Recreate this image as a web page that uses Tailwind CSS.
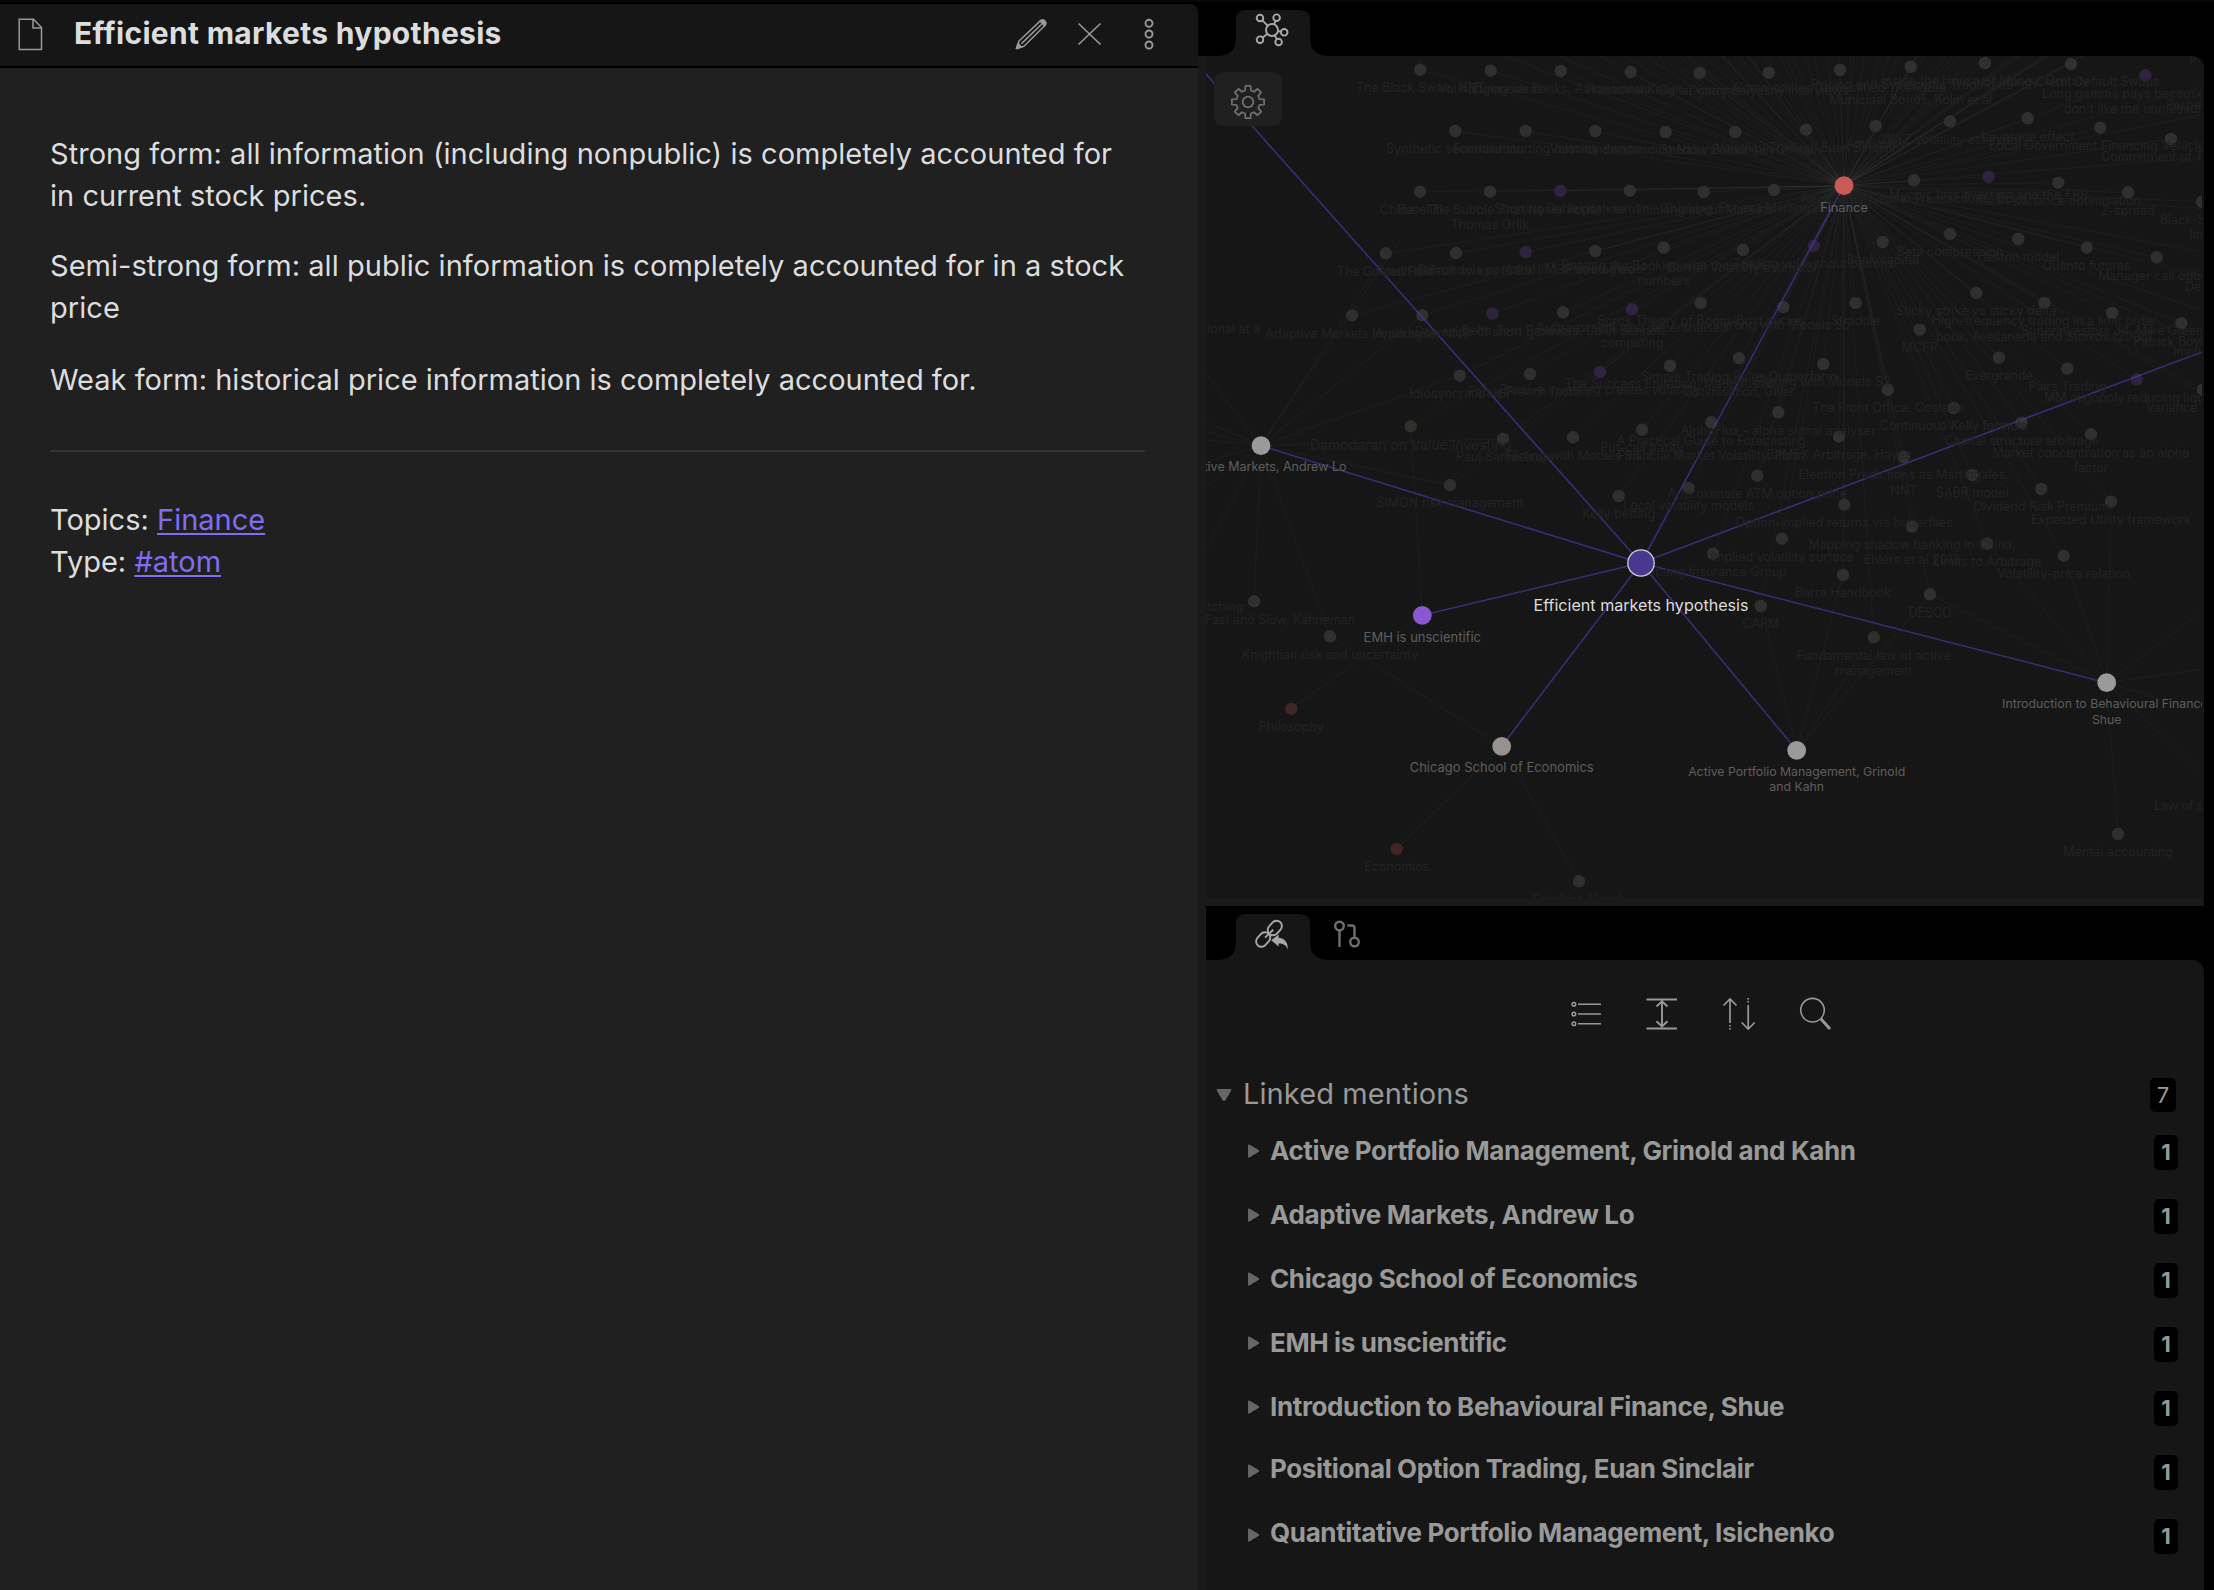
<!DOCTYPE html>
<html lang="en">
<head>
<meta charset="utf-8">
<title>Efficient markets hypothesis</title>
<script src="https://cdn.jsdelivr.net/npm/@tailwindcss/browser@4"></script>
</head>
<body class="bg-black">
<div class="flex h-[1590px] w-[2214px] flex-col overflow-hidden bg-black font-['Inter',sans-serif]">
  <div class="h-[2px] shrink-0 bg-[#080808]"></div>
  <div class="flex min-h-0 flex-1">

    <!-- Note pane -->
    <main class="flex w-[1198px] shrink-0 flex-col pt-[2px]">
      <header class="flex h-16 shrink-0 items-center rounded-tr-lg border-b-2 border-black bg-[#161616] pr-[33px] pl-[16px]">
        <svg class="mb-[2px] h-9 w-7 shrink-0" viewBox="0 0 28 36" fill="none" stroke="#999" stroke-width="1.5"><path d="M3.2 3.2H17.5L25.5 11.5V33.5H3.2ZM17 3.2V12H25.5"/></svg>
        <h1 class="ml-[30px] flex-1 pb-1 text-[30px] leading-none font-bold tracking-[0.3px] text-[#dcddde]">Efficient markets hypothesis</h1>
        <div class="flex items-center gap-[27px] pb-[3px]">
          <svg class="h-8 w-8" viewBox="0 0 32 32" fill="none" stroke="#999" stroke-width="1.5" stroke-linejoin="round"><path d="M1.5 30.5 4 23 24.5 3.6Q27.5.8 30 3.2 32 5.400 29.300 8L9 28.300Z"/><path d="M6.500 25.600 26.500 6.200"/><path d="M1.500 30.500 3 25.500 6.500 29ZM25 3Q27.500.8 30 3.200 31.500 5 29.500 8Z" fill="#999"/></svg>
          <svg class="h-8 w-8" viewBox="0 0 32 32" fill="none" stroke="#999" stroke-width="1.6"><path d="M4.500 5.500 26.500 26.500M26.500 5.500 4.500 26.500"/></svg>
          <svg class="h-8 w-8" viewBox="0 0 32 32" fill="none" stroke="#999" stroke-width="1.900"><circle cx="16" cy="5.300" r="3.500"/><circle cx="16" cy="16" r="3.500"/><circle cx="16" cy="27" r="3.500"/></svg>
        </div>
      </header>
      <article class="flex-1 bg-[#202020] px-[50px] pt-[65px] text-[29px] leading-[42px] tracking-[0.04px] text-[#dcddde]">
        <p class="mb-7">Strong form: all information (including nonpublic) is completely accounted for<br>in current stock prices.</p>
        <p class="mb-[30px]">Semi-strong form: all public information is completely accounted for in a stock<br>price</p>
        <p class="mb-[49px] tracking-normal">Weak form: historical price information is completely accounted for.</p>
        <hr class="mr-[3px] mb-[47px] border-0 border-t-2 border-[#333]">
        <p class="tracking-normal">Topics: <a class="text-[#7f6df2] underline decoration-2 underline-offset-[3px]">Finance</a><br>Type: <a class="text-[#7f6df2] underline decoration-2 underline-offset-[3px]">#atom</a></p>
      </article>
    </main>

    <!-- Resize handle -->
    <div class="w-2 shrink-0 pt-[54px]"><div class="h-full bg-[#1a1a1a]"></div></div>

    <!-- Side panes -->
    <aside class="flex w-[998px] shrink-0 flex-col">
      <div class="relative flex h-[54px] shrink-0 items-end">
        <svg class="absolute bottom-0 left-[-8px] h-[46px] w-[140px]" viewBox="0 0 140 46" fill="#161616"><path d="M20 46Q38 45 38 28V10Q38 0 48 0H102Q112 0 112 10V28Q112 45 130 46Z"/></svg>
        <div class="relative ml-[30px] flex h-[46px] w-[74px] justify-center pr-[2px] pt-[3px]">
          <svg class="h-[34px] w-[34px]" viewBox="0 0 34 34" fill="none" stroke="#a8a8a8" stroke-width="1.900"><circle cx="17" cy="17" r="6"/><circle cx="5" cy="5" r="3.300"/><circle cx="21.600" cy="4.700" r="3.300"/><circle cx="29.200" cy="19.300" r="3.300"/><circle cx="23.600" cy="29" r="3.300"/><circle cx="5" cy="26.700" r="3.300"/><path d="M7.300 7.300 12.700 12.700M20.500 7.900 19 11.300M23 18 26 18.700M19.700 22.500 21.900 26M7.600 24.500 12.400 21"/></svg>
        </div>
      </div>
      <section class="relative h-[850px] shrink-0 overflow-hidden rounded-tr-xl border-r-2 border-b-8 border-r-[#161616] border-b-[#1a1a1a] bg-[#161616]">
        <svg id="graph" class="block h-[842px] w-[996px]" viewBox="1206 56 996 842" font-family="Inter, sans-serif" text-anchor="middle"></svg>
        <button class="absolute top-4 left-2 flex h-[54px] w-[68px] items-center justify-center rounded-[10px] bg-[#202020] pt-[6px]">
          <svg id="gear" class="h-9 w-9" viewBox="-18 -18 36 36" fill="none" stroke="#6e6e6e" stroke-width="1.800" stroke-linejoin="round"></svg>
        </button>
      </section>

      <div class="relative flex h-[54px] shrink-0 items-end bg-black">
        <svg class="absolute bottom-0 left-[-8px] h-[46px] w-[140px]" viewBox="0 0 140 46" fill="#161616"><path d="M20 46Q38 45 38 28V10Q38 0 48 0H102Q112 0 112 10V28Q112 45 130 46Z"/></svg>
        <div class="relative ml-[30px] flex h-[46px] w-[74px] justify-center pr-[2px] pt-[5px]">
          <svg class="h-[34px] w-[34px]" viewBox="0 0 34 34" fill="none" stroke="#a8a8a8" stroke-width="1.900"><rect x="-8" y="-5.300" width="16" height="10.600" rx="5.300" transform="translate(19.800 9) rotate(-48)"/><rect x="-8" y="-5.300" width="16" height="10.600" rx="5.300" transform="translate(8.200 20.500) rotate(-48)"/><path d="M10 18.600 18.200 10.800"/><path d="M16.200 21.300 23.600 15.500V18.700C29.500 19 33.500 23.500 32.600 30.500 31.500 26.500 28.500 24.200 23.600 24.400V27.500Z" fill="#a8a8a8" stroke="none"/></svg>
        </div>
        <svg class="mb-[9px] ml-[20px] h-[34px] w-[34px]" viewBox="0 0 34 34" fill="none" stroke="#6e6e6e" stroke-width="2.400"><circle cx="9.500" cy="9" r="4.300"/><path d="M9.500 13.500V30M17.500 8.500H22Q24.500 8.500 24.500 11V21"/><circle cx="24.500" cy="25" r="4.300"/></svg>
      </div>

      <section class="min-h-0 flex-1 rounded-tr-xl bg-[#161616]">
        <div class="flex gap-[42.300px] pt-[37px] pl-[363px]">
          <svg class="h-[34px] w-[34px]" viewBox="0 0 34 34" fill="none" stroke="#999" stroke-width="1.500"><circle cx="4.900" cy="7.200" r="1.800"/><circle cx="4.900" cy="17" r="1.800"/><circle cx="4.900" cy="26.800" r="1.800"/><path d="M9 7.200H32M9 17H32M9 26.800H32"/></svg>
          <svg class="h-[34px] w-[34px]" viewBox="0 0 34 34" fill="none" stroke="#999" stroke-width="1.900"><path d="M1.500 2.500H32M1.500 31.500H32M17 4.500V29.500M11.500 9.500 17 4.300 22.500 9.500M11.500 24.300 17 29.500 22.500 24.300"/></svg>
          <svg class="h-[34px] w-[34px]" viewBox="0 0 34 34" fill="none" stroke="#999" stroke-width="1.700"><path d="M1.500 8.500 8 2 14.500 8.500M8 2V26M19.700 25.500 26.200 32 32.700 25.500M26.200 32V8"/><path d="M8 28V33M26.200 1V6" stroke-dasharray="1.500 1.500"/></svg>
          <svg class="h-[34px] w-[34px]" viewBox="0 0 34 34" fill="none" stroke="#999" stroke-width="1.600"><circle cx="14.500" cy="13.200" r="11.800"/><path d="M23 22 32 32" stroke-width="3"/></svg>
        </div>

        <div class="mt-[42px] flex h-[44px] items-center pr-7 pl-[10px]">
          <svg class="h-[14px] w-4 shrink-0" viewBox="0 0 16 14" fill="#666"><path d="M2 1H14Q16 1 15 3L9.500 12Q8 14 6.500 12L1 3Q0 1 2 1Z"/></svg>
          <h2 class="ml-[11px] flex-1 pb-1 text-[29px] leading-none tracking-[0.1px] text-[#999]">Linked mentions</h2>
          <span class="flex h-[34px] w-[26px] items-center justify-center rounded-[5px] bg-black text-[22px] text-[#999]">7</span>
        </div>
        <ul id="mentions" class="mt-[3px]"></ul>
      </section>
    </aside>
  </div>
</div>

<template id="mention">
  <li class="flex h-16 items-center pr-[26px] pl-[42px]">
    <svg class="mb-[2px] h-[14px] w-3 shrink-0" viewBox="0 0 12 14" fill="#666"><path d="M0 1.500Q0 0 1.500.5L10.500 6Q12 7 10.500 8L1.500 13.500Q0 14 0 12.500Z"/></svg>
    <span class="ml-[10px] flex-1 text-[26px] leading-none font-bold tracking-[-0.37px] text-[#999]"></span>
    <b class="flex h-[35px] w-6 items-center justify-center rounded-[5px] bg-black text-[22px] font-bold text-[#999]">1</b>
  </li>
</template>

<script>
const mentions = ["Active Portfolio Management, Grinold and Kahn", "Adaptive Markets, Andrew Lo", "Chicago School of Economics", "EMH is unscientific", "Introduction to Behavioural Finance, Shue", "Positional Option Trading, Euan Sinclair", "Quantitative Portfolio Management, Isichenko"];
mentions.forEach((m, i) => {
  const row = document.getElementById("mention").content.cloneNode(true);
  const label = row.querySelector("span");
  label.textContent = m;
  label.classList.add(i < 5 ? "pb-[2px]" : "pb-[6px]");
  document.getElementById("mentions").append(row);
});

// Gear: eight teeth around a ring
let d = "";
for (let i = 0; i < 8; i++) {
  const a = i * Math.PI / 4;
  [[-0.25, 11.9], [-0.16, 16.300], [0.16, 16.300], [0.25, 11.9]].forEach(([o, r], k) => {
    d += (i || k ? "L" : "M") + (r * Math.sin(a + o)).toFixed(2) + " " + (-r * Math.cos(a + o)).toFixed(2);
  });
}
document.getElementById("gear").innerHTML = `<path d="${d}Z"/><circle r="5.300"/>`;

// Notes linked to Finance: x, y, colour (a, b grey; p purple), label
const notes = [
 [1420.3,69.7,"a","The Black Swan, NNT"],[1490.7,70.7,"a","Vol hedging ideas"],[1560.7,71,"a","European Banks, Autonomous"],[1630.7,72,"b","Fractional Kelly"],[1699.7,73,"b","Dollar gamma"],[1768.7,72.7,"a","Dmitry Balyasny interviews"],[1840,70,"a","Commodities Demystified, Trafigura"],[1910.7,66.7,"a","Pricing and Systematic Trading of|Municipal Bonds, Kolm et al"],[1985,63,"a","Inside the House of Money, Drobny"],[2071,64,"a","Hedging Credit Default Swaps"],[2145.3,75.3,"p","Long gamma pays because people|don't like the unmeasurable"],
 [1455.3,131,"b","Synthetic securitisation"],[1525.7,131,"b","Forward starting options"],[1595.3,131,"b","Volatility swaps"],[1665.7,132,"a","Understanding Natural Gas"],[1735.3,132,"b","Shadow Banking in China"],[1806,129.7,"a","Volatility Trading, Euan Sinclair"],[1875.7,126,"b","Ambiguity"],[1950,121.3,"b","GKYZ volatility estimator"],[2027.7,118.3,"b","Leverage effect"],[2100.3,127.7,"b","Local Government Financing Vehicles"],[2171,139,"a","Commitment of Traders"],
 [1420,191.7,"b","Basel III"],[1490,191.7,"a","China - The Bubble That Never Pops,|Thomas Orlik"],[1560.3,191,"p","Shorting vol is not +ev"],[1629.7,190.7,"a","Daniel Kahneman - Thinking"],[1703.7,192,"b","Thinking about Markets"],[1774,190,"a","Project Martingale"],[1914,180.3,"a","Regulatory Capital Transactions, Boyd"],[1988.7,176.7,"p","Myopic loss aversion and the ERP"],[2058.3,182.7,"b","Mean-variance optimisation"],[2128,192.3,"b","Z-spread"],[2202,201.7,"b","Black-Scholes|limit"],
 [1385.7,253.3,"b","The Golden Rule"],[1456,253,"b","Credit default swaps (CDS)"],[1525.7,252,"p","Parrondo's paradox in 13F strategies"],[1595.3,251,"b","M-shaped model"],[1663.7,247.7,"a","Beating the Bookies with their own|numbers"],[1743,250,"b","Barrier volatility estimator"],[1814,246,"p","Trading vol without options"],[1882.7,242,"b","Bank capital"],[1950,234,"b","Beta compression"],[2018.3,239,"b","Heston model"],[2086.7,247.7,"b","Quanto futures"],[2156.7,257.3,"b","Manager call option"],
 [1352,315.3,"b","Adaptive Markets Hypothesis"],[1422.3,315.3,"a","Antifragile, NNT"],[1492.3,313.7,"p","Downside of short gamma"],[1563,312.3,"a","Delta Zero Products, Colin Bennett"],[1632,309.3,"p","Auftragstaktik and decentralised|computing"],[1700.7,303,"a","Soros Theory of Boom-Bust cycles"],[1783.3,307,"a","Flirting with Models S5"],[1855.7,303,"b","Straddle"],[1976.3,293,"b","Sticky strike vs sticky delta"],[2044.3,303,"a","High-frequency trading in a limit order|book, Avellaneda and Stoikov (2008)"],[2112.3,313,"a","Superinvestors 34, Mike Green"],[2181.3,323.3,"a","Patrick Boyle on"],
 [1459.7,375.7,"b","Idiosyncratic risk"],[1530,374,"b","Fama-French factors"],[1600,372,"p","Passive investing creates volatility"],[1670,365.7,"a","The Success Equation, Mauboussin"],[1739,358.3,"a","Simple Trading Rules Outperform|Optimisation, Giller"],[1823.3,364,"a","Flirting with Models S2"],[1919.7,329.7,"b","MCFR"],[1999,357.7,"b","Evergrande"],[2067.3,368.7,"b","Pairs Trading"],[2136.7,379.3,"p","MM oligopoly reducing liquidity"],[2203,389.7,"a","Variance Reduction"],
 [1503,439,"b","Paul Samuelson"],[1573,437.3,"a","Flirting with Models S4"],[1642,429.7,"b","Put-call parity"],[1711.3,422.3,"a","A Practical Guide to Forecasting|Financial Market Volatility, Poon"],[1778.3,412.3,"a","AlphaFlux - alpha signal analyser"],[1839,436.7,"a","BitMEX Arbitrage, Hayes"],[1887.7,389.7,"a","The Front Office, Costello"],[1953.7,408,"b","Continuous Kelly formula"],[2021.7,422.7,"a","Capital structure arbitrage"],[2091,434.3,"a","Market concentration as an alpha|factor"],
 [1450,485,"b","SIMON risk management"],[1618.7,496,"b","Kelly betting"],[1688.7,488,"b","Local volatility models"],[1757.3,475.7,"b","Approximate ATM option price"],[1903.7,457,"a","Election Predictions as Martingales,|NNT"],[1972.3,475,"b","SABR model"],[2041.3,489,"b","Dividend Risk Premium"],[2111,501.7,"b","Expected Utility framework"],[1844.3,504.7,"b","Option-implied returns via butterflies"],[1782,538.7,"b","Implied volatility surface"],[1713,553.7,"b","Anbang Insurance Group"],[1912,526.7,"a","Mapping shadow banking in China,|Ehlers et al 2018"],[1987.3,543.7,"b","Limits to Arbitrage"],[2063.7,555.7,"b","Volatility-price relation"],[1843,575,"a","Barra Handbook"],[1930,594.3,"a","DESCO"],[1760.7,606,"b","CAPM"],[1873.7,637.3,"b","Fundamental law of active|management"],[1410.7,426.3,"c",""]
];
// Notes linked elsewhere
const others = [
 [1254,601.3,"a",""],[1330,636.3,"a","Knightian risk and uncertainty"],[1291.3,708.7,"r","Philosophy"],[1396.7,849,"r","Economics"],[1579,881.3,"a","Friedrich Hayek"],[2118,834,"b","Mental accounting"]
];
const fill = { a: "#303030", b: "#312e2e", c: "#30302d", p: "#30233f", r: "#412525" };
const finance = [1844, 185.7], lo = [1261, 445.7], emh = [1641, 563], uns = [1422.3, 615.3], chi = [1501.7, 746.3], shue = [2106.7, 682.7], apm = [1796.7, 750.3];
const line = (a, b, c, w) => `<line x1="${a[0]}" y1="${a[1]}" x2="${b[0]}" y2="${b[1]}" stroke="${c}" stroke-width="${w}"/>`;
const faint = (a, b) => line(a, b, "rgba(255,255,255,.027)", 1.3);
const text = (x, y, s, c, size, anchor = "middle") => s.split("|").map((t, i) => `<text x="${x}" y="${y + i * 15.3}" fill="${c}" font-size="${size}" text-anchor="${anchor}">${t}</text>`).join("");
let out = "";
for (const n of notes) out += faint(finance, n);
for (let i = 0; i < 46; i++) out += faint(finance, [1380 + i * 21 + (i * 37 % 17), -60 - (i * 53 % 40)]);
[[2300,60],[2300,95],[2300,150],[2300,215],[2300,270],[2300,300],[2300,345],[2300,385],[2300,450],[1350,-40],[1280,-30]].forEach(p => out += faint(finance, p));
[[1385.7,253.3],[1422.3,315.3],[1400,240],[1459.7,375.7],[1503,439],[1450,485],[1254,601.3],[1330,636.3],[1180,340],[1180,410],[1180,425],[1180,437],[1180,470],[1180,505],[1180,600]].forEach(p => out += faint(lo, p));
[[1410.7,426.3],[1291.3,708.7]].forEach(p => out += faint(uns, p));
[[1330,636.3],[1396.7,849],[1579,881.3]].forEach(p => out += faint(chi, p));
[[1760.7,606],[1843,575],[1930,594.3],[1873.7,637.3]].forEach(p => out += faint(apm, p));
[[1930,594.3],[1987.3,543.7],[2063.7,555.7],[2111,501.7],[2118,834],[2202,611],[2202,669],[2202,712],[2202,773]].forEach(p => out += faint(shue, p));
for (const n of [...notes, ...others]) out += `<circle cx="${n[0]}" cy="${n[1]}" r="6.200" fill="${fill[n[2]]}"/>`;
for (const p of [[1206, 74], finance, [2202, 352], lo, uns, chi, shue, apm]) out += line(emh, p, "rgb(76 58 175 / .65)", 1.6);
const dim = "#232323";
for (const n of [...notes, ...others]) out += text(n[0], n[1] + 22.3, n[3], dim, 12.5);
out += text(1410.7, 450.300, "Damodaran on Value Investing", dim, 14);
out += text(1355, 623.500, "Thinking, Fast and Slow, Kahneman", dim, 12.4, "end") + text(1243.500, 610.500, "Pattern matching", dim, 12.4, "end") + text(1260, 333, "Being rational at a", dim, 12.4, "end");
out += text(2166, 109, "Perpetual", dim, 12.4, "start") + text(2190, 63, "Inflation", dim, 12.4, "start") + text(2185, 291, "Delta", dim, 12.4, "start") + text(2173, 356, "Implied", dim, 12.4, "start") + text(2154, 810, "Law of small", dim, 12.4, "start");
for (const [p, c] of [[finance, "#c95a57"], [lo, "#9a9a9a"], [uns, "#8a57d1"], [chi, "#999190"], [shue, "#9a9a9a"], [apm, "#9a9a9a"]]) out += `<circle cx="${p[0]}" cy="${p[1]}" r="9.400" fill="${c}"/>`;
out += `<circle cx="1641" cy="563" r="13.200" fill="#483891" stroke="#cfcfcf" stroke-width="1.300"/>`;
const mid = "#5e5e5e";
out += text(1844, 211.7, "Finance", mid, 12.8) + text(1346.500, 471, "Adaptive Markets, Andrew Lo", mid, 12.5, "end") + text(1422.3, 641.6, "EMH is unscientific", mid, 13) + text(1501.7, 772.2, "Chicago School of Economics", mid, 13) + text(2106.7, 708.300, "Introduction to Behavioural Finance,|Shue", mid, 12.300) + text(1796.7, 776, "Active Portfolio Management, Grinold|and Kahn", mid, 12.3);
out += text(1641, 610.5, "Efficient markets hypothesis", "#dcddde", 16.1);
document.getElementById("graph").innerHTML = out;
</script>
</body>
</html>
